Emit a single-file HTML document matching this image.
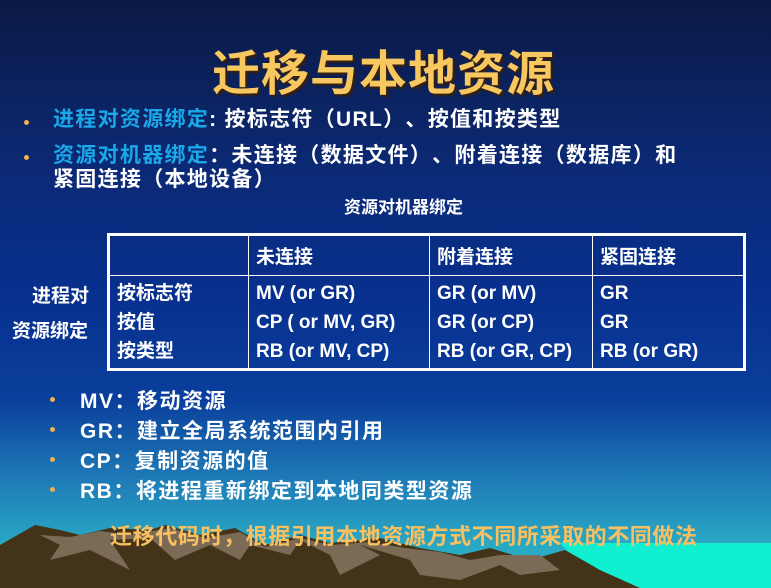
<!DOCTYPE html>
<html><head><meta charset="utf-8"><style>
body{margin:0;}
#s{position:relative;width:771px;height:588px;overflow:hidden;font-family:"Liberation Sans","Noto Sans CJK SC",sans-serif;font-weight:bold;color:#fff;text-spacing-trim:space-all;
background:linear-gradient(to bottom,#0b1a45 0px,#0b2a78 180px,#08308f 300px,#0a3f9c 400px,#1c74b4 470px,#29a6c4 540px,#2ab8c8 588px);}
.a{position:absolute;white-space:nowrap;}
.t{font-size:48px;color:#f8c860;text-shadow:2px 2px 2px #402000;left:212px;top:34px;letter-spacing:1px;}
.b{font-size:21px;letter-spacing:1.3px;}
.c{color:#1aa8e8;}
.d{position:absolute;width:5px;height:5px;border-radius:50%;background:#f0b050;}
table{position:absolute;left:107px;top:233px;width:639px;height:138px;border-collapse:collapse;border:3px solid #fff;font-size:19px;}
td{border:1.5px solid #fff;padding:0 7px;vertical-align:middle;}
</style></head><body><div id="s">
<div class="a t">迁移与本地资源</div>
<div class="d" style="left:24px;top:120px"></div>
<div class="a b" style="left:53px;top:103px"><span class="c">进程对资源绑定</span>: 按标志符（URL）、按值和按类型</div>
<div class="d" style="left:24px;top:155px"></div>
<div class="a b" style="left:53px;top:139px"><span class="c">资源对机器绑定</span>：未连接（数据文件）、附着连接（数据库）和</div>
<div class="a b" style="left:53px;top:163px">紧固连接（本地设备）</div>
<div class="a" style="left:344px;top:193px;font-size:17px">资源对机器绑定</div>
<div class="a" style="left:32px;top:281px;font-size:19px">进程对</div>
<div class="a" style="left:12px;top:316px;font-size:19px">资源绑定</div>
<table>
<tr style="height:41px"><td style="width:124px"></td><td style="width:166px">未连接</td><td style="width:148px">附着连接</td><td>紧固连接</td></tr>
<tr><td style="line-height:29px">按标志符<br>按值<br>按类型</td><td style="line-height:29px">MV (or GR)<br>CP ( or MV, GR)<br>RB (or MV, CP)</td><td style="line-height:29px">GR (or MV)<br>GR (or CP)<br>RB (or GR, CP)</td><td style="line-height:29px">GR<br>GR<br>RB (or GR)</td></tr>
</table>
<div class="d" style="left:50px;top:397px"></div>
<div class="a b" style="left:80px;top:385px;letter-spacing:1.5px">MV：移动资源</div>
<div class="d" style="left:50px;top:427px"></div>
<div class="a b" style="left:80px;top:415px;letter-spacing:1.5px">GR：建立全局系统范围内引用</div>
<div class="d" style="left:50px;top:457px"></div>
<div class="a b" style="left:80px;top:445px;letter-spacing:1.5px">CP：复制资源的值</div>
<div class="d" style="left:50px;top:487px"></div>
<div class="a b" style="left:80px;top:475px;letter-spacing:1.5px">RB：将进程重新绑定到本地同类型资源</div>
<svg class="a" style="left:0;top:0" width="771" height="588">
<polygon points="560,543 771,543 771,588 600,588" fill="#10f0d0"/>
<polygon points="0,545 35,525 60,530 80,535 110,528 150,530 165,525 200,535 235,528 265,545 300,535 330,543 380,538 420,548 460,555 490,548 530,560 565,550 600,570 640,588 0,588" fill="#433318"/>
<polygon points="40,535 60,545 50,560 90,550 130,570 110,540 150,538 175,560 210,545 240,560 250,545 290,555 300,540 330,555 340,575 380,555 360,545 410,560 420,575 460,580 500,565 520,575 560,570 540,555 500,555 470,560 440,552 405,548 370,542 330,545 300,538 265,547 240,532 205,538 170,528 130,535 100,531 70,537" fill="#7b6a55"/>
</svg>
<div class="a" style="left:110px;top:519px;font-size:22px;letter-spacing:0.6px;color:#f8c060">迁移代码时，根据引用本地资源方式不同所采取的不同做法</div>
</div></body></html>
